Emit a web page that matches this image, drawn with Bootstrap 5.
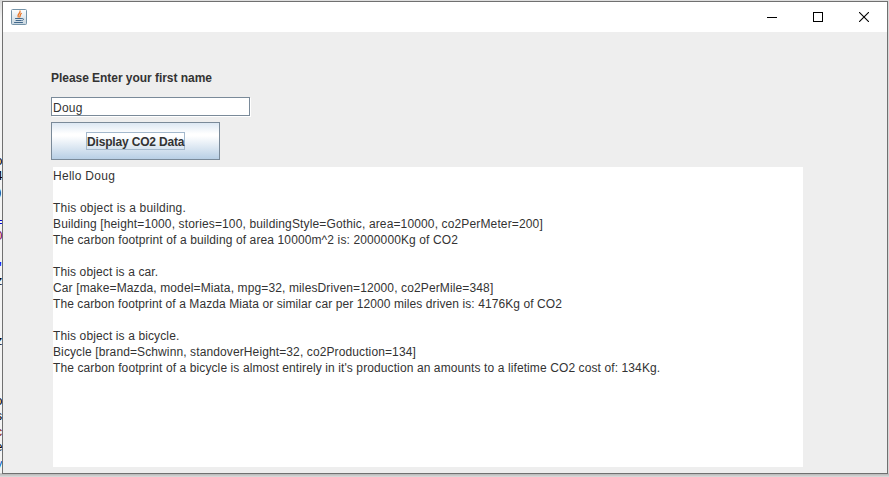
<!DOCTYPE html>
<html lang="en">
<head>
<meta charset="utf-8">
<title>CO2 Data</title>
<link href="https://cdn.jsdelivr.net/npm/bootstrap@5.3.0/dist/css/bootstrap.min.css" rel="stylesheet">
<style>
html,body{height:477px;overflow:hidden}
body{background:#dadada;font:12px/16px "Liberation Sans",Arial,sans-serif;color:#333}
.desk{width:889px;height:477px;padding:1px 1px 3px 2px;background:linear-gradient(#e4e4e4 0,#d8d8d8 1px,#d8d8d8 473px,#b8b8b8 474px,#dcdcdc 477px)}
.behind{left:0;top:0;width:3px;height:473px;background:linear-gradient(#d8d8d8,#f4f4f4 20px)}
.behind span{position:absolute;left:-5px;font:13px/16px "Liberation Mono",monospace;color:#000}
.win{width:886px;height:473px;border:1px solid #707070;background:#eee;position:relative}
.titlebar{height:30px;background:#fff;padding-left:8px}
.ctl{width:46px;height:30px}
.content-area{padding:37px 0 0 48px}
.prompt{height:18px;line-height:18px;font-weight:700;letter-spacing:-.04px}
.name-field{width:199px;height:19px;min-height:0;margin-top:10px;padding:2px 1px 0;border:1px solid #7a8a99;border-radius:0;box-shadow:1px 1px #fff;background:#fff;font-size:12px;line-height:15px;letter-spacing:.25px;color:#333}
.show-btn{width:169px;height:38px;margin-top:6px;padding:0;border:1px solid #7a8a99;border-radius:0;background:linear-gradient(#dde8f3 0,#fff 30%,#fff 36%,#b8cfe5 100%);font-size:12px;line-height:18px;font-weight:700;letter-spacing:-.17px;color:#333}
.show-btn span{border:1px solid #a3b8cc;width:99px;height:18px;white-space:nowrap}
.output{width:750px;height:300px;margin:7px 0 0 2px;background:#fff;padding-top:1px}
.output div{height:16px;white-space:pre;letter-spacing:.12px}
.output div:nth-child(1){letter-spacing:.28px}
.output div:nth-child(3){letter-spacing:.19px}
.output div:nth-child(4){letter-spacing:.138px}
.output div:nth-child(5){letter-spacing:.118px}
.output div:nth-child(8){letter-spacing:.127px}
.output div:nth-child(9){letter-spacing:.087px}
.output div:nth-child(12){letter-spacing:.113px}
.output div:nth-child(13){letter-spacing:.103px}
</style>
<script src="https://cdn.jsdelivr.net/npm/bootstrap@5.3.0/dist/js/bootstrap.bundle.min.js"></script>
</head>
<body>
<div class="desk position-relative">
  <div class="behind position-absolute overflow-hidden" aria-hidden="true">
    <span style="top:154px">o</span><span style="top:169px">4</span><span style="top:185px">)</span>
    <span style="top:215px;color:#00c">=</span><span style="top:229px;color:#7f0055">0</span><span style="top:260px;color:#00f">"</span>
    <span style="top:274px">z</span><span style="top:334px">z</span><span style="top:394px">o</span><span style="top:409px">s</span><span style="top:425px;color:#7f2020">c</span><span style="top:440px">e</span><span style="top:457px;color:#06c">y</span>
  </div>
  <div class="win">
    <div class="titlebar d-flex align-items-center">
      <svg width="16" height="16" viewBox="0 0 16 16"><defs><linearGradient id="g" x2="0" y2="1"><stop stop-color="#fff"/><stop offset="1" stop-color="#c7d5df"/></linearGradient></defs><rect x=".5" y=".5" width="15" height="15" rx="1" fill="url(#g)" stroke="#7593a8"/><g fill="none" stroke-linecap="round"><path d="M9 2C10 4 6 4.700 7.200 8M10.300 4.500C8.500 5.500 9.700 6.500 8.700 8" stroke="#ec7423" stroke-width="1.300"/><path d="M4.500 9.500H10.500M5 11.500H10M3.500 13.500H11.500M11 9.500C13.300 9 13 11.500 11 11.500" stroke="#41688c"/></g></svg>
      <div class="ms-auto d-flex">
        <div class="ctl d-flex align-items-center justify-content-center"><svg width="10" height="10" shape-rendering="crispEdges"><path d="M0 5.500H10" stroke="#000"/></svg></div>
        <div class="ctl d-flex align-items-center justify-content-center"><svg width="10" height="10" shape-rendering="crispEdges"><path d="M.5.5H9.500V9.500H.5Z" fill="none" stroke="#000"/></svg></div>
        <div class="ctl d-flex align-items-center justify-content-center"><svg width="10" height="10"><path d="M0 0L10 10M10 0L0 10" stroke="#000" stroke-width="1.100"/></svg></div>
      </div>
    </div>
    <div class="content-area d-flex flex-column align-items-start">
      <label class="prompt" for="n">Please Enter your first name</label>
      <input id="n" class="name-field form-control" value="Doug">
      <button class="show-btn btn d-flex align-items-center justify-content-center"><span>Display CO2 Data</span></button>
      <div class="output">
<div>Hello Doug</div><div></div>
<div>This object is a building.</div>
<div>Building [height=1000, stories=100, buildingStyle=Gothic, area=10000, co2PerMeter=200]</div>
<div>The carbon footprint of a building of area 10000m^2 is: 2000000Kg of CO2</div><div></div>
<div>This object is a car.</div>
<div>Car [make=Mazda, model=Miata, mpg=32, milesDriven=12000, co2PerMile=348]</div>
<div>The carbon footprint of a Mazda Miata or similar car per 12000 miles driven is: 4176Kg of CO2</div><div></div>
<div>This object is a bicycle.</div>
<div>Bicycle [brand=Schwinn, standoverHeight=32, co2Production=134]</div>
<div>The carbon footprint of a bicycle is almost entirely in it's production an amounts to a lifetime CO2 cost of: 134Kg.</div>
      </div>
    </div>
  </div>
</div>
</body>
</html>
